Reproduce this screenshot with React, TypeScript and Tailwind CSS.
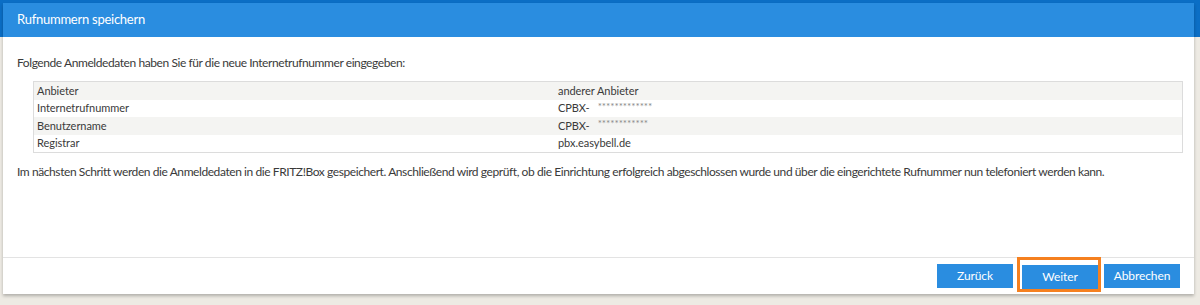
const rows = [
  { label: 'Anbieter', value: 'anderer Anbieter' },
  { label: 'Internetrufnummer', value: 'CPBX-', mask: '*************' },
  { label: 'Benutzername', value: 'CPBX-', mask: '************' },
  { label: 'Registrar', value: 'pbx.easybell.de' },
];

const Button = ({ children }: { children: React.ReactNode }) => (
  <button className="w-[76px] h-[24px] bg-[#2a8de0] text-white text-[12px] tracking-[-0.1px]">{children}</button>
);

export default function App() {
  return (
    <div
      className="h-[305px] w-[1200px] pt-[3px] pl-[3px] bg-[linear-gradient(to_bottom,#0b6ec5_37px,#edeae3_37px)] text-[#3a3a3a]"
      style={{ fontFamily: 'Lato, "Open Sans", sans-serif' }}
    >
      <div className="w-[1191px] h-[291px] bg-white flex flex-col shadow-[0_2px_3px_rgba(0,0,0,0.25)]">
        <div className="h-[34px] bg-[#2a8de0] flex items-center px-[14px] text-white text-[13px] tracking-[-0.25px]">
          Rufnummern speichern
        </div>

        <div className="flex-1 px-[14px] pt-[18px] text-[12px] tracking-[-0.42px]">
          <p className="leading-[16px]">
            Folgende Anmeldedaten haben Sie für die neue Internetrufnummer eingegeben:
          </p>
          <div className="mt-[10px] ml-[16px] w-[1150px] border border-[#dcdcdc] tracking-[-0.05px]">
            {rows.map((r, i) => (
              <div
                key={r.label}
                className={`flex h-[17.5px] items-center text-[11px] ${i % 2 === 0 ? 'bg-[#f4f4f2]' : 'bg-white'}`}
              >
                <div className="w-[524px] pl-[3px]">{r.label}</div>
                <div className="flex items-center">
                  {r.value}
                  {r.mask && <span className="ml-[8px] text-[10px] text-[#888] -mt-[4px]">{r.mask}</span>}
                </div>
              </div>
            ))}
          </div>
          <p className="mt-[11px] leading-[16px]">
            Im nächsten Schritt werden die Anmeldedaten in die FRITZ!Box gespeichert. Anschließend wird geprüft, ob die
            Einrichtung erfolgreich abgeschlossen wurde und über die eingerichtete Rufnummer nun telefoniert werden kann.
          </p>
        </div>

        <div className="h-[37px] border-t border-[#e3e3e3] flex items-center justify-end pr-[14px]">
          <Button>Zurück</Button>
          <div className="relative ml-[9px] mr-[6px]">
            <Button>Weiter</Button>
            <div className="absolute -left-[5px] -top-[6px] w-[84px] h-[35px] border-[3px] border-[#f5801f] pointer-events-none" />
          </div>
          <Button>Abbrechen</Button>
        </div>
      </div>
    </div>
  );
}
